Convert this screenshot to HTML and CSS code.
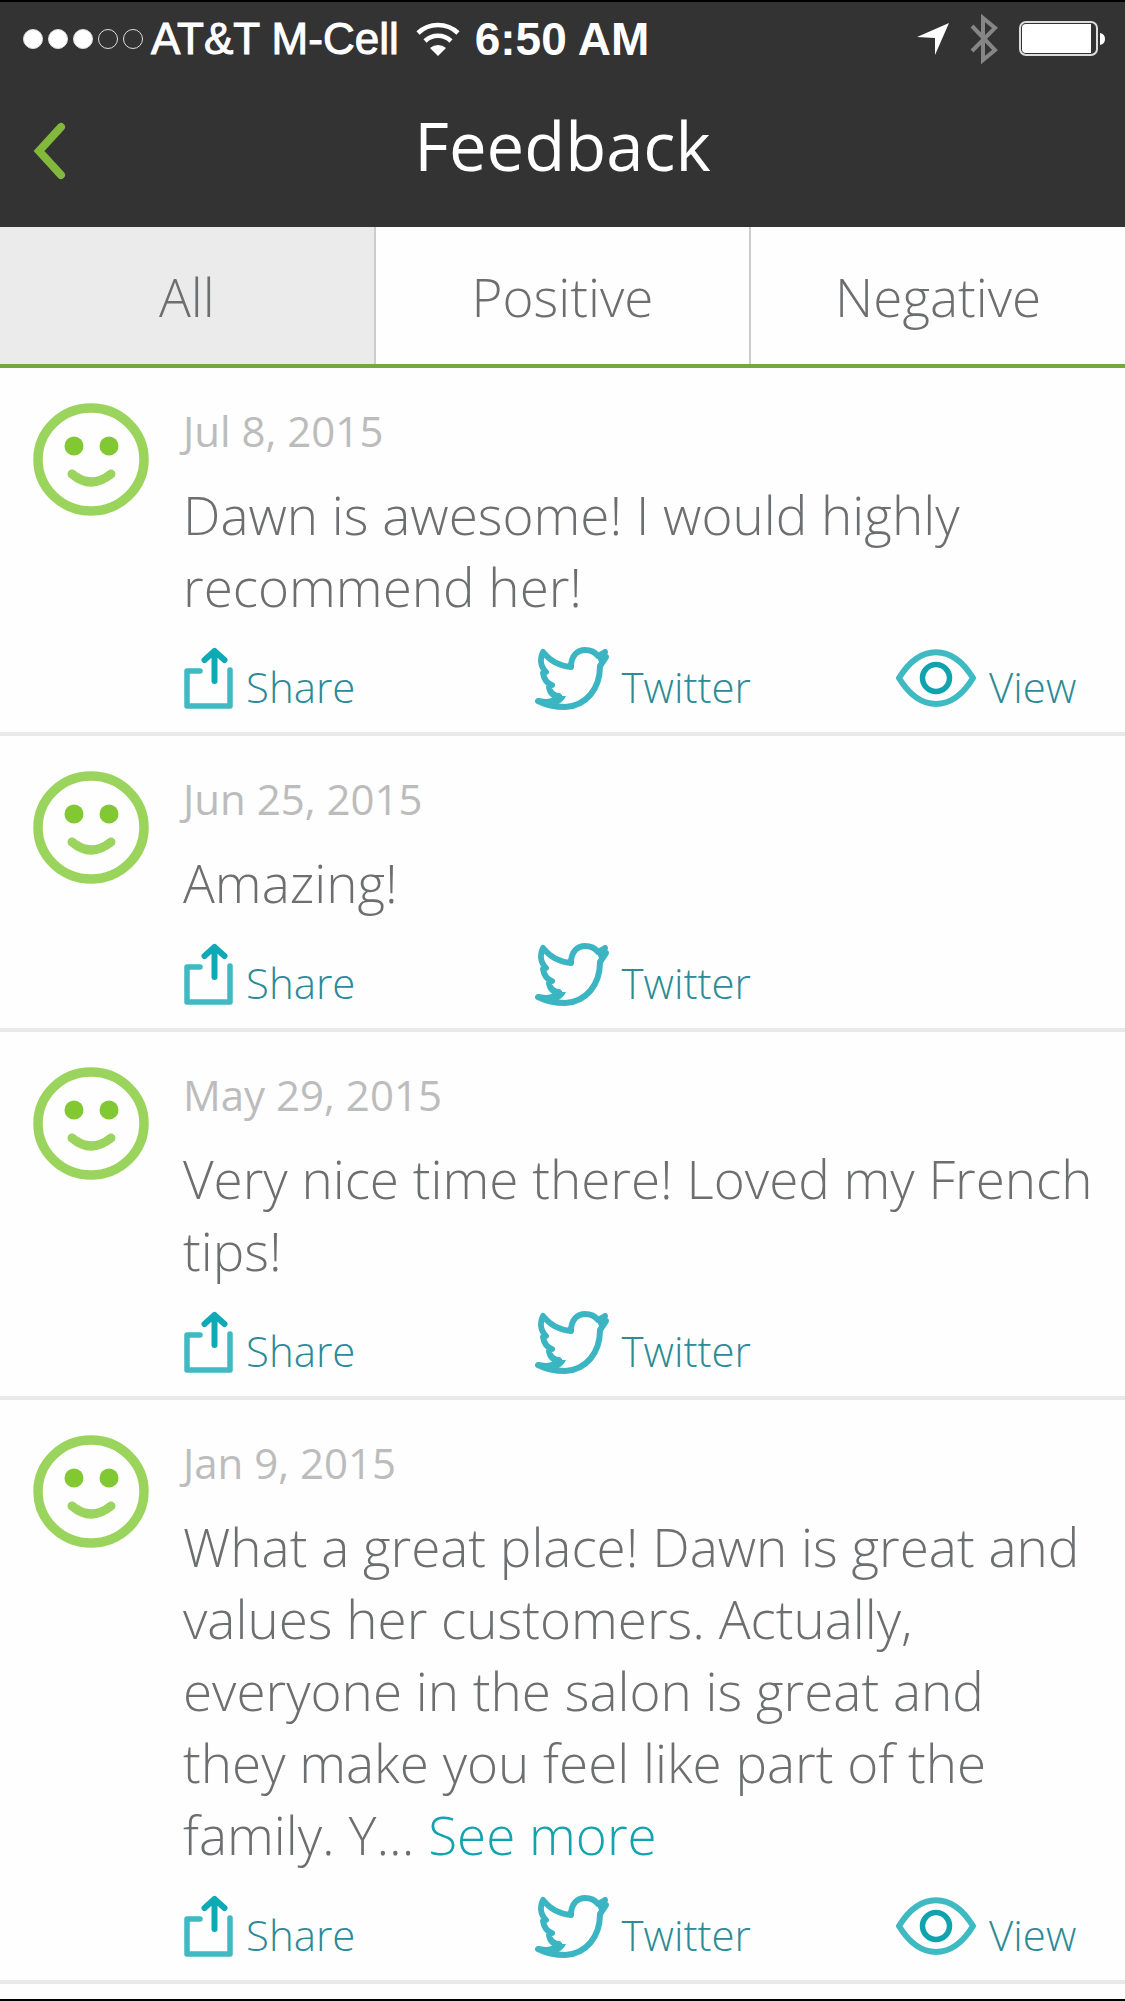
FILE: index.html
```
<!DOCTYPE html>
<html lang="en">
<head>
    <meta charset="utf-8">
    <meta name="viewport" content="width=device-width, initial-scale=1">
    <title>Feedback</title>
    <link rel="stylesheet" href="styles.css">
</head>
<body>
    <!-- Shared icons -->
    <svg class="icon-defs" aria-hidden="true">
        <symbol id="icon-smile" viewBox="0 0 116 113">
            <ellipse cx="58" cy="56.500" rx="53" ry="51.500" fill="none" stroke="#9ad45d" stroke-width="9.500"/>
            <circle cx="41" cy="43" r="9.500" fill="#82c833"/>
            <circle cx="76" cy="43" r="9.500" fill="#82c833"/>
            <path d="M39 71 Q58 87 78 71" fill="none" stroke="#9ad45d" stroke-width="9" stroke-linecap="round"/>
        </symbol>
        <symbol id="icon-share" viewBox="0 0 50 63">
            <path d="M17 24 H4 V59 H47 V23" fill="none" stroke="#3fb9c2" stroke-width="5.500" stroke-linecap="round" stroke-linejoin="round"/>
            <path d="M31.500 34 V4 M21.500 13 L31.500 4 L41.500 13" fill="none" stroke="#0fa8b5" stroke-width="6" stroke-linecap="round" stroke-linejoin="round"/>
        </symbol>
        <symbol id="icon-twitter" viewBox="0 0 74 63">
            <path d="M3 54 C12 56 20 54 24 49 C18 49 15 46 14 40 L17 38 C11 36 9 32 8 26 L11 25 C5 19 5 11 8 5 C15 14 25 19 36 20 C36 8 43 3 50 3 C56 3 60 5 63 9 L70 5 L68 10 L71 10 L65 19 C65 42 51 59 30 60 C20 60 11 58 3 54 Z" fill="none" stroke="#3bb5c2" stroke-width="6" stroke-linejoin="round"/>
            <path d="M61 7 L71 4 L69 9 L73 10 L65 18 Z" fill="#3bb5c2"/>
            <path d="M4 54 C13 57 22 55 25 49 L31 49 C28 56 20 60 13 59 Z" fill="#3bb5c2"/>
        </symbol>
        <symbol id="icon-eye" viewBox="0 0 80 60">
            <path d="M3 29.500 C24 -5 56 -5 77 29.500 C56 64 24 64 3 29.500 Z" fill="none" stroke="#3fb9c2" stroke-width="6" stroke-linejoin="round"/>
            <circle cx="40" cy="29.500" r="13.500" fill="none" stroke="#0fa3ae" stroke-width="5.500"/>
        </symbol>
    </svg>

    <header class="header">
        <div class="status-bar">
            <div class="signal">
                <span class="dot full"></span>
                <span class="dot full"></span>
                <span class="dot full"></span>
                <span class="dot"></span>
                <span class="dot"></span>
            </div>
            <span class="carrier">AT&amp;T M-Cell</span>
            <svg class="wifi" viewBox="0 0 44 34" aria-hidden="true">
                <path d="M2 11 A29 29 0 0 1 42 11" fill="none" stroke="#fff" stroke-width="4.500"/>
                <path d="M9 19 A19 19 0 0 1 35 19" fill="none" stroke="#fff" stroke-width="4.500"/>
                <path d="M14 26 A12 12 0 0 1 30 26 L22 34 Z" fill="#fff"/>
            </svg>
            <span class="clock">6:50 AM</span>
            <div class="indicators">
                <svg class="location" viewBox="0 0 32 32" aria-hidden="true">
                    <path d="M32 0 L18 32 V15 L0 14 Z" fill="#fff"/>
                </svg>
                <svg class="bluetooth" viewBox="0 0 28 50" aria-hidden="true">
                    <path d="M2 12 L25 36 L13 46 V4 L25 14 L2 37" fill="none" stroke="#868686" stroke-width="4"/>
                </svg>
                <svg class="battery" viewBox="0 0 88 36" aria-hidden="true">
                    <rect x="1" y="1" width="77" height="33" rx="6" fill="none" stroke="#ddd" stroke-width="2"/>
                    <path d="M7 3 H72 V32 H7 Q3 32 3 28 V7 Q3 3 7 3 Z" fill="#fff"/>
                    <path d="M81 12 Q86 13 86 18 Q86 23 81 24 Z" fill="#fff"/>
                </svg>
            </div>
        </div>
        <div class="title-bar">
            <button type="button" class="back" aria-label="Back">
                <svg viewBox="0 0 34 58" aria-hidden="true">
                    <path d="M28 5 L6 29 L28 53" fill="none" stroke="#82b93c" stroke-width="8" stroke-linecap="round"/>
                </svg>
            </button>
            <h1 class="title">Feedback</h1>
        </div>
    </header>

    <nav class="tabs">
        <button type="button" class="tab active">All</button>
        <button type="button" class="tab">Positive</button>
        <button type="button" class="tab">Negative</button>
    </nav>

    <main class="feedback-list">
        <article class="feedback">
            <svg class="smile" aria-hidden="true"><use href="#icon-smile"/></svg>
            <div class="feedback-body">
                <time class="date" datetime="2015-07-08">Jul 8, 2015</time>
                <p class="message">Dawn is awesome! I would highly recommend her!</p>
                <div class="actions">
                    <a class="action" href="#"><svg class="share" aria-hidden="true"><use href="#icon-share"/></svg>Share</a>
                    <a class="action" href="#"><svg class="twitter" aria-hidden="true"><use href="#icon-twitter"/></svg>Twitter</a>
                    <a class="action" href="#"><svg class="eye" aria-hidden="true"><use href="#icon-eye"/></svg>View</a>
                </div>
            </div>
        </article>

        <article class="feedback">
            <svg class="smile" aria-hidden="true"><use href="#icon-smile"/></svg>
            <div class="feedback-body">
                <time class="date" datetime="2015-06-25">Jun 25, 2015</time>
                <p class="message">Amazing!</p>
                <div class="actions">
                    <a class="action" href="#"><svg class="share" aria-hidden="true"><use href="#icon-share"/></svg>Share</a>
                    <a class="action" href="#"><svg class="twitter" aria-hidden="true"><use href="#icon-twitter"/></svg>Twitter</a>
                </div>
            </div>
        </article>

        <article class="feedback">
            <svg class="smile" aria-hidden="true"><use href="#icon-smile"/></svg>
            <div class="feedback-body">
                <time class="date" datetime="2015-05-29">May 29, 2015</time>
                <p class="message">Very nice time there! Loved my French tips!</p>
                <div class="actions">
                    <a class="action" href="#"><svg class="share" aria-hidden="true"><use href="#icon-share"/></svg>Share</a>
                    <a class="action" href="#"><svg class="twitter" aria-hidden="true"><use href="#icon-twitter"/></svg>Twitter</a>
                </div>
            </div>
        </article>

        <article class="feedback">
            <svg class="smile" aria-hidden="true"><use href="#icon-smile"/></svg>
            <div class="feedback-body">
                <time class="date" datetime="2015-01-09">Jan 9, 2015</time>
                <p class="message">What a great place! Dawn is great and values her customers. Actually, everyone in the salon is great and they make you feel like part of the family. Y... <a class="see-more" href="#">See more</a></p>
                <div class="actions">
                    <a class="action" href="#"><svg class="share" aria-hidden="true"><use href="#icon-share"/></svg>Share</a>
                    <a class="action" href="#"><svg class="twitter" aria-hidden="true"><use href="#icon-twitter"/></svg>Twitter</a>
                    <a class="action" href="#"><svg class="eye" aria-hidden="true"><use href="#icon-eye"/></svg>View</a>
                </div>
            </div>
        </article>
    </main>
</body>
</html>
```
FILE: styles.css
```
* {
    box-sizing: border-box;
}
body {
    display: flex;
    flex-direction: column;
    min-height: 100vh;
    margin: 0;
    border-top: 2px solid #000;
    border-bottom: 2px solid #000;
    background: #fefefe;
    color: #6d6e70;
    font-family: "Open Sans", sans-serif;
    font-weight: 300;
}
button {
    padding: 0;
    border: none;
    background: none;
    color: inherit;
    font: inherit;
    cursor: pointer;
}
a {
    text-decoration: none;
}
.icon-defs {
    position: absolute;
    width: 0;
    height: 0;
}

/* Header */
.header {
    background: #333;
    color: #fff;
}
.status-bar {
    display: flex;
    align-items: center;
    height: 73px;
    padding: 0 18px 0 23px;
    font-family: "Liberation Sans", Arial, sans-serif;
    font-size: 44px;
    font-weight: 400;
}
.signal {
    display: flex;
    gap: 5px;
    margin-right: 8px;
}
.dot {
    width: 20px;
    height: 20px;
    border: 1px solid #ddd;
    border-radius: 50%;
}
.dot.full {
    background: #fff;
}
.carrier {
    -webkit-text-stroke: 1px #fff;
}
.wifi {
    width: 44px;
    height: 34px;
    margin: 0 15px 0 17px;
}
.clock {
    font-size: 46px;
    font-weight: 700;
}
.indicators {
    display: flex;
    align-items: center;
    gap: 21px;
    margin-left: auto;
}
.location {
    width: 32px;
    height: 32px;
}
.bluetooth {
    width: 28px;
    height: 50px;
}
.battery {
    width: 88px;
    height: 36px;
}
.title-bar {
    display: grid;
    grid-template-columns: 1fr auto 1fr;
    align-items: center;
    height: 152px;
    padding: 0 33px;
}
.back {
    justify-self: start;
    height: 58px;
}
.back svg {
    display: block;
    width: 34px;
    height: 58px;
}
.title {
    margin: 0;
    padding-bottom: 12px;
    font-size: 67px;
    font-weight: 400;
    line-height: 90px;
}

/* Tabs */
.tabs {
    display: flex;
    height: 141px;
    border-bottom: 4px solid #73a83f;
}
.tab {
    flex: 1;
    padding-top: 2px;
    font-size: 53px;
}
.tab + .tab {
    border-left: 2px solid #ccc;
}
.tab.active {
    background: #ebebeb;
}

/* Feedback items */
.feedback {
    display: flex;
    gap: 34px;
    padding: 35px 28px 17px 33px;
    border-bottom: 4px solid #e9e9e9;
}
.smile {
    flex: none;
    width: 116px;
    height: 113px;
}
.feedback-body {
    flex: 1;
}
.date {
    display: block;
    color: #bcbcbc;
    font-size: 42px;
    font-weight: 400;
    line-height: 56px;
}
.message {
    margin: 20px 0 23px;
    font-size: 53px;
    line-height: 72px;
}
.see-more {
    color: #12a3ae;
}
.actions {
    display: grid;
    grid-template-columns: 35fr 36fr 20fr;
}
.action {
    display: flex;
    align-items: flex-end;
    gap: 13px;
    height: 69px;
    color: #2b8b97;
    font-size: 42px;
    line-height: 56px;
}
.action svg {
    flex: none;
    height: 63px;
    margin-bottom: 5px;
}
.share {
    width: 50px;
}
.twitter {
    width: 74px;
}
.eye {
    width: 80px;
}
```
